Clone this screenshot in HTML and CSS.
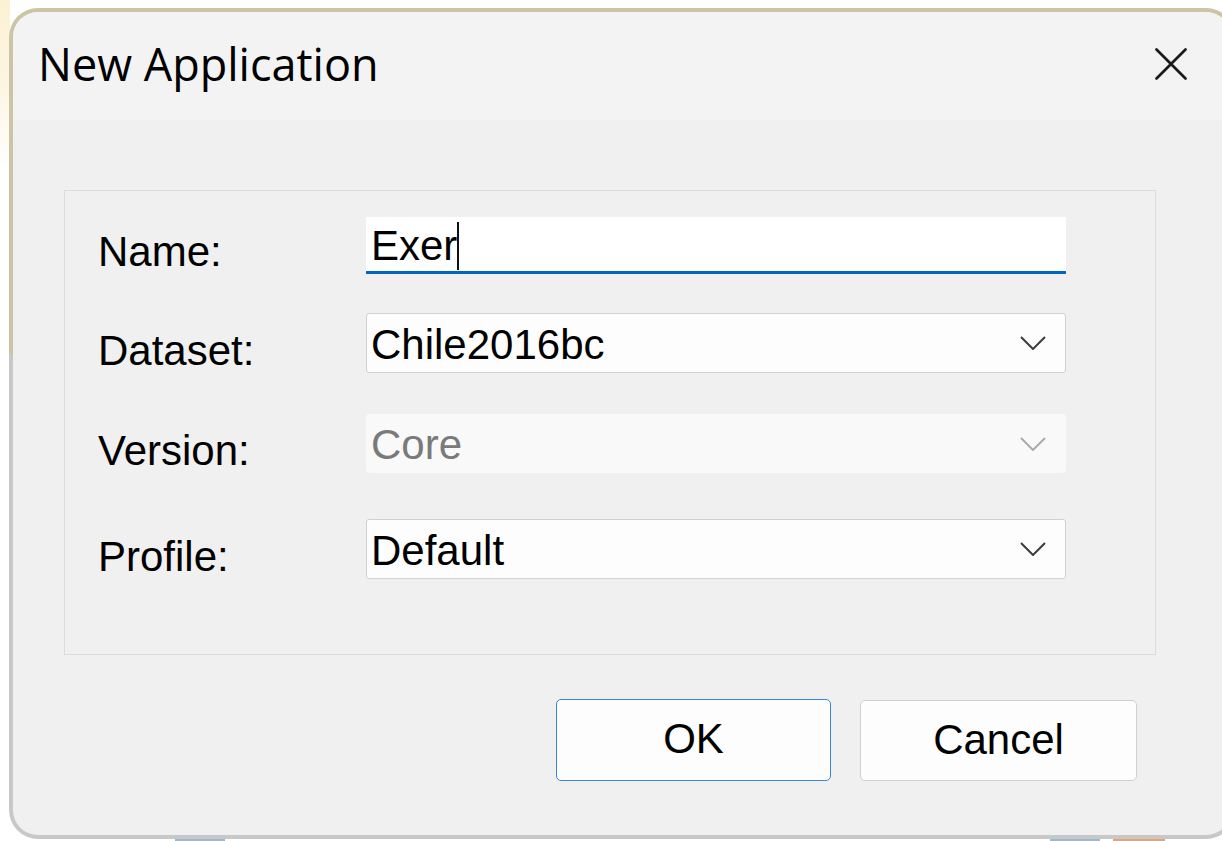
FILE: index.html
```html
<!DOCTYPE html>
<html lang="en">
<head>
<meta charset="utf-8">
<title>New Application</title>
<link rel="stylesheet" href="styles.css">
</head>
<body>
<div class="desktop">
  <div class="taskbar-hint">
    <span class="hint hint-blue hint-a"></span>
    <span class="hint hint-blue hint-b"></span>
    <span class="hint hint-orange"></span>
  </div>

  <div class="window-frame">
    <div class="dialog">
      <header class="titlebar">
        <h1 class="title">New Application</h1>
        <button class="close" aria-label="Close">
          <svg width="32" height="32" viewBox="0 0 32 32">
            <path d="M1.5 1.5 L30.5 30.5 M30.5 1.5 L1.5 30.5" stroke="#1b1b1b" stroke-width="2.7" stroke-linecap="round" fill="none"/>
          </svg>
        </button>
      </header>

      <div class="dialog-body">
        <div class="group">
          <div class="row row-name">
            <label class="label">Name:</label>
            <div class="field field-text">Exer<span class="caret"></span></div>
          </div>
          <div class="row row-dataset">
            <label class="label">Dataset:</label>
            <div class="field field-select">
              <span class="value">Chile2016bc</span>
              <svg class="chevron" width="26" height="14" viewBox="0 0 26 14"><path d="M1 1 L13 13 L25 1" stroke="#3c3c3c" stroke-width="2" fill="none"/></svg>
            </div>
          </div>
          <div class="row row-version">
            <label class="label">Version:</label>
            <div class="field field-select is-disabled">
              <span class="value">Core</span>
              <svg class="chevron" width="26" height="14" viewBox="0 0 26 14"><path d="M1 1 L13 13 L25 1" stroke="#ababab" stroke-width="2" fill="none"/></svg>
            </div>
          </div>
          <div class="row row-profile">
            <label class="label">Profile:</label>
            <div class="field field-select">
              <span class="value">Default</span>
              <svg class="chevron" width="26" height="14" viewBox="0 0 26 14"><path d="M1 1 L13 13 L25 1" stroke="#3c3c3c" stroke-width="2" fill="none"/></svg>
            </div>
          </div>
        </div>

        <div class="actions">
          <button class="btn btn-primary">OK</button>
          <button class="btn btn-cancel">Cancel</button>
        </div>
      </div>
    </div>
  </div>
</div>
</body>
</html>
```

FILE: styles.css
```css
html, body {
  margin: 0;
  padding: 0;
}

body {
  width: 1222px;
  height: 841px;
  overflow: hidden;
  background: #ffffff;
  font-family: "Liberation Sans", Arial, sans-serif;
}

/* desktop behind the dialog window */
.desktop {
  position: relative;
  width: 1222px;
  height: 841px;
  overflow: hidden;
  background:
    linear-gradient(#fcf1d2, #fdf6e4 90px, #ffffff 170px) 0 0 / 10px 100% no-repeat,
    #ffffff;
}

.taskbar-hint {
  position: absolute;
  left: 0;
  bottom: 0;
  width: 100%;
  height: 4px;
}

.hint {
  position: absolute;
  bottom: 0;
  height: 4px;
}

.hint-blue { background: #9fb8d2; }
.hint-orange { background: #e3a577; }
.hint-a { left: 175px; width: 50px; }
.hint-b { left: 1050px; width: 50px; }
.hint-orange { left: 1113px; width: 52px; }

/* window border, tinted by the wallpaper above, grey below;
   the window runs slightly past the right edge of the screen */
.window-frame {
  position: absolute;
  left: 9px;
  top: 8px;
  width: 1226px;
  height: 831px;
  box-sizing: border-box;
  padding: 4px;
  border-radius: 29px;
  background: linear-gradient(to bottom, #ccc4a5 0, #ccc4a5 345px, #c8c8c8 348px, #c8c8c8 100%);
}

.dialog {
  height: 100%;
  border-radius: 25px;
  background: #f0f0f0;
  overflow: hidden;
  display: flex;
  flex-direction: column;
}

/* title bar */
.titlebar {
  height: 108px;
  flex: none;
  background: #f3f3f3;
  display: flex;
  align-items: flex-start;
  padding-left: 25px;
}

.title {
  margin: 22px 0 0 0;
  font-family: "Open Sans", "Noto Sans", sans-serif;
  font-weight: 400;
  font-size: 45px;
  line-height: 60px;
  color: #000000;
}

.close {
  margin: 36px 44px 0 auto;
  padding: 0;
  border: 0;
  background: none;
  width: 32px;
  height: 32px;
  display: block;
}

.close svg {
  display: block;
}

/* body */
.dialog-body {
  flex: 1;
  display: flex;
  flex-direction: column;
}

.group {
  margin: 70px 0 0 51px;
  width: 1092px;
  height: 465px;
  box-sizing: border-box;
  border: 1px solid #dcdcdc;
  padding: 26px 0 0 33px;
  display: flex;
  flex-direction: column;
}

.row {
  display: flex;
  align-items: flex-end;
}

.row-dataset { margin-top: 39px; }
.row-version { margin-top: 41px; }
.row-profile { margin-top: 46px; }

.label {
  width: 268px;
  flex: none;
  font-size: 42px;
  line-height: 44px;
  color: #000000;
}

.field {
  width: 700px;
  box-sizing: border-box;
  font-size: 42px;
  color: #000000;
}

.field-text {
  height: 57px;
  background: #ffffff;
  border-bottom: 3px solid #0067c0;
  padding: 3px 0 0 5px;
  line-height: 51px;
  display: flex;
  align-items: center;
}

.caret {
  display: inline-block;
  width: 2px;
  height: 48px;
  background: #111111;
}

.field-select {
  height: 60px;
  background: #fdfdfd;
  border: 1px solid #d0d0d0;
  border-radius: 3px;
  padding: 3px 19px 0 4px;
  line-height: 56px;
  display: flex;
  align-items: center;
  justify-content: space-between;
}

.field-select .chevron {
  flex: none;
  margin-top: -3px;
}

.field-select.is-disabled {
  height: 59px;
  background: #f9f9f9;
  border-color: #f9f9f9;
  color: #7a7a7a;
}

/* buttons */
.actions {
  margin-top: 44px;
  padding-right: 94px;
  display: flex;
  justify-content: flex-end;
  align-items: flex-start;
  gap: 29px;
}

.btn {
  height: 82px;
  box-sizing: border-box;
  background: #fdfdfd;
  border: 1px solid #d0d0d0;
  border-radius: 5px;
  padding: 0 0 2px 0;
  font-family: "Liberation Sans", Arial, sans-serif;
  font-size: 42px;
  line-height: 48px;
  color: #000000;
  display: flex;
  align-items: center;
  justify-content: center;
}

.btn-primary {
  width: 275px;
  border-color: #3a86d4;
}

.btn-cancel {
  width: 277px;
  height: 81px;
  margin-top: 1px;
}
```
